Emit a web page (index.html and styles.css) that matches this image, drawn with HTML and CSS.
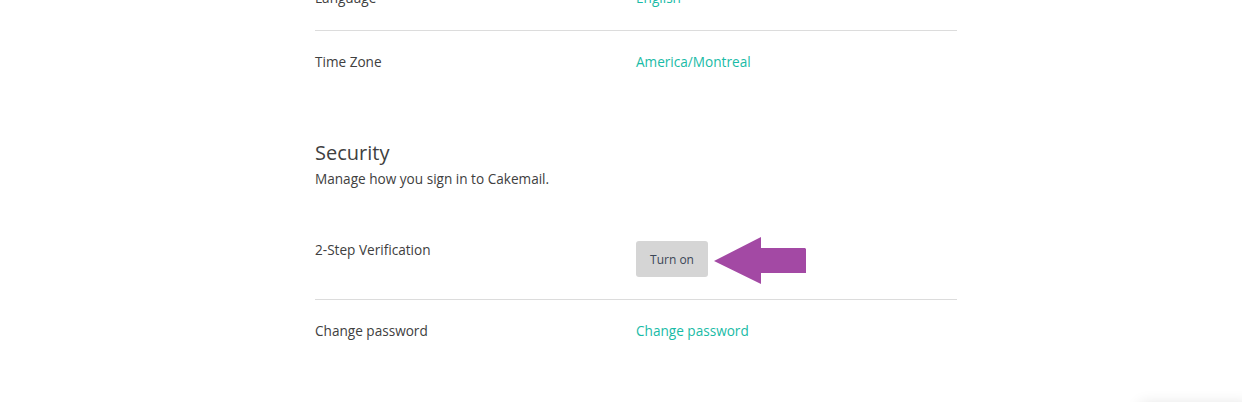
FILE: index.html
```html
<!DOCTYPE html>
<html>
<head>
<meta charset="utf-8">
<link rel="stylesheet" href="styles.css">
</head>
<body>
<main class="page">
  <section class="settings">
    <div class="row row-first divided">
      <div class="label">Language</div>
      <div class="value"><a class="link">English</a></div>
    </div>
    <div class="row">
      <div class="label">Time Zone</div>
      <div class="value"><a class="link">America/Montreal</a></div>
    </div>
  </section>

  <section class="settings security">
    <h2 class="title">Security</h2>
    <p class="subtitle">Manage how you sign in to Cakemail.</p>
    <div class="row divided">
      <div class="label">2-Step Verification</div>
      <div class="value value-btn">
        <button class="btn">Turn on</button>
        <svg class="arrow" width="96" height="50" viewBox="0 0 96 50">
          <polygon points="1,24 48,0 48,11 92,11 93,12 93,36 48,36 48,47" fill="#a349a4"/>
        </svg>
      </div>
    </div>
    <div class="row">
      <div class="label">Change password</div>
      <div class="value"><a class="link">Change password</a></div>
    </div>
  </section>
</main>
<div class="widget-shadow"></div>
</body>
</html>
```

FILE: styles.css
```css
html, body {
  margin: 0;
  padding: 0;
  background: #fff;
  overflow: hidden;
  height: 402px;
}
body {
  font-family: "Open Sans", "Liberation Sans", sans-serif;
  color: #404040;
  font-size: 13.6px;
  position: relative;
}
.page {
  width: 642px;
  margin: -33px auto 0 315px;
}
.row {
  display: grid;
  grid-template-columns: 321px 1fr;
  padding: 22px 0;
  line-height: 18px;
}
.row-first {
  padding-bottom: 23px;
}
.divided {
  border-bottom: 1px solid #dcdcdc;
}
.link {
  color: #19bba6;
  text-decoration: none;
}
.security {
  margin-top: 48px;
}
.title {
  margin: 0;
  font-size: 20px;
  font-weight: 400;
  line-height: 24px;
  color: #404040;
}
.subtitle {
  margin: 5px 0 31px;
  line-height: 18px;
}
.value-btn {
  position: relative;
}
.btn {
  display: block;
  width: 72px;
  height: 36px;
  border: 0;
  border-radius: 3px;
  background: #d5d5d5;
  color: #3b4656;
  font-family: "Open Sans", "Liberation Sans", sans-serif;
  font-size: 12px;
  padding: 0;
}
.arrow {
  position: absolute;
  left: 77px;
  top: -4px;
}
.widget-shadow {
  position: absolute;
  left: 1140px;
  top: 404px;
  width: 110px;
  height: 60px;
  box-shadow: 0 0 14px rgba(0,0,0,0.12);
  background: #fff;
}
```
